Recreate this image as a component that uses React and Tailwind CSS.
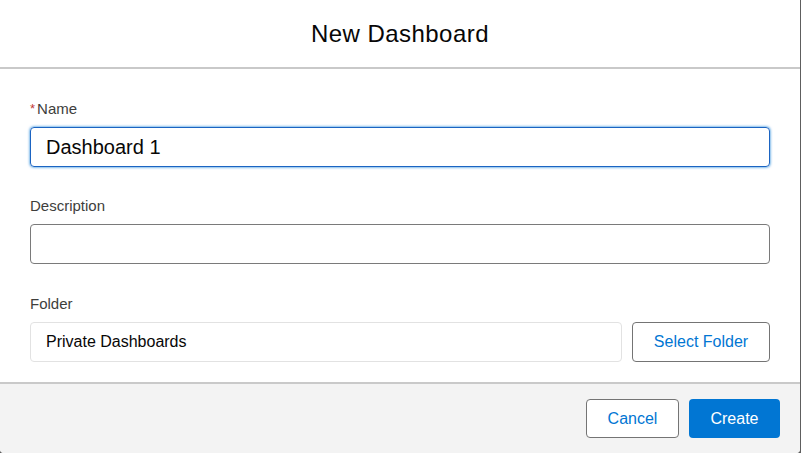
import React from 'react';

export default function App() {
  return (
    <div className="w-[801px] h-[453px] bg-[#5e5e5e] overflow-hidden font-['Liberation_Sans',Arial,sans-serif]">
      <div className="w-[800px] h-[453px] bg-white rounded-b-[4px] overflow-hidden flex flex-col">
        {/* Header */}
        <div className="h-[69px] flex items-center justify-center border-b-2 border-[#c9c9c9]">
          <h1 className="text-[24px] leading-[30px] tracking-[0.45px] text-[#080707]">New Dashboard</h1>
        </div>

        {/* Body */}
        <div className="px-[30px] pt-[30px] pb-[20px] flex flex-col">
          <label className="h-[19px] mb-[9px] text-[15px] leading-[19px] text-[#3e3e3c] flex items-center">
            <span className="text-[#c23934] text-[13px] mr-[2px]">*</span>Name
          </label>
          <div className="h-[40px] rounded-[4px] border border-[#1b64c2] shadow-[0_0_3px_#0176d3] flex items-center px-[15px] text-[20px] text-[#080707]">
            Dashboard 1
          </div>

          <label className="mt-[29px] h-[19px] mb-[9px] text-[15px] leading-[19px] text-[#3e3e3c]">Description</label>
          <div className="h-[40px] rounded-[4px] border border-[#7a7a7a]" />

          <label className="mt-[30px] h-[19px] mb-[9px] text-[15px] leading-[19px] text-[#3e3e3c]">Folder</label>
          <div className="flex gap-[10px]">
            <div className="flex-1 h-[40px] rounded-[4px] border border-[#e2e2e2] flex items-center px-[15px] text-[16px] text-[#080707]">
              Private Dashboards
            </div>
            <button className="w-[138px] h-[40px] rounded-[4px] border border-[#747474] bg-white text-[16px] text-[#0176d3]">
              Select Folder
            </button>
          </div>
        </div>

        {/* Footer */}
        <div className="flex-1 bg-[#f3f3f3] border-t-2 border-[#c9c9c9] flex items-start justify-end gap-[10px] pt-[15px] pr-[20px]">
          <button className="w-[93px] h-[39px] rounded-[4px] border border-[#747474] bg-white text-[16px] text-[#0176d3]">
            Cancel
          </button>
          <button className="w-[91px] h-[39px] rounded-[4px] bg-[#0176d3] text-[16px] text-white">
            Create
          </button>
        </div>
      </div>
    </div>
  );
}
